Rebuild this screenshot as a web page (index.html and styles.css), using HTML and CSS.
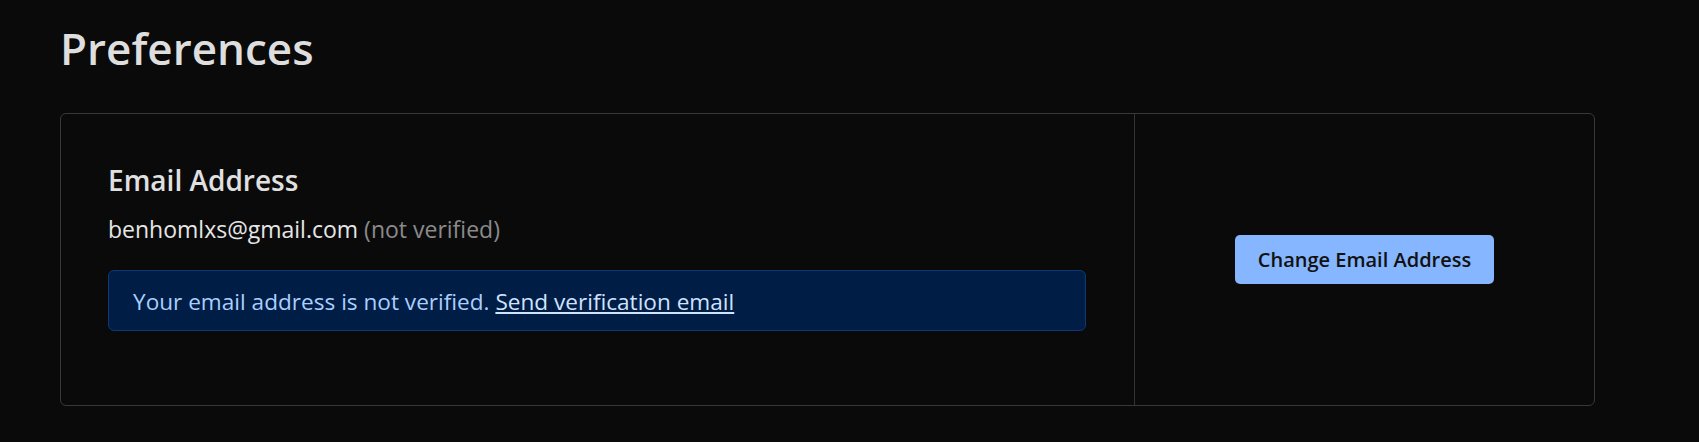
FILE: index.html
```html
<!DOCTYPE html>
<html lang="en">
<head>
<meta charset="utf-8">
<title>Preferences</title>
<link rel="stylesheet" href="styles.css">
</head>
<body>
<main class="page">
  <h1 class="page-title">Preferences</h1>
  <section class="card">
    <div class="card-main">
      <h2 class="card-heading">Email Address</h2>
      <p class="email-line">benhomlxs@gmail.com <span class="muted">(not verified)</span></p>
      <div class="alert">Your email address is not verified. <a href="#" class="alert-link">Send verification email</a></div>
    </div>
    <div class="card-side">
      <button class="btn-primary" type="button">Change Email Address</button>
    </div>
  </section>
</main>
</body>
</html>
```

FILE: styles.css
```css
* { box-sizing: border-box; }
html, body {
  margin: 0;
  padding: 0;
  background: #0a0a0a;
}
body {
  font-family: "Open Sans", "Noto Sans", sans-serif;
  color: #e6e6e6;
}
.page {
  padding: 22px 0 0 60px;
}
.page-title {
  margin: 0;
  font-size: 44px;
  line-height: 1.2;
  font-weight: 600;
  color: #dedede;
}
.card {
  margin-top: 38px;
  width: 1535px;
  height: 293px;
  display: flex;
  border: 1px solid #383838;
  border-radius: 6px;
}
.card-main {
  width: 1074px;
  padding: 50px 48px 0 47px;
  border-right: 1px solid #333;
}
.card-heading {
  margin: 0;
  font-size: 28px;
  line-height: 1.2;
  font-weight: 600;
  color: #e0e0e0;
}
.email-line {
  margin: 15px 0 0;
  font-size: 23px;
  line-height: 1.5;
  color: #e6e6e6;
}
.muted { color: #8a8a8a; }
.alert {
  margin-top: 23px;
  padding: 14px 24px 11px;
  font-size: 22.6px;
  line-height: 34px;
  color: #a9cfff;
  background: #001d45;
  border: 1px solid #0b3978;
  border-radius: 6px;
}
.alert-link {
  color: #cfe3ff;
  text-decoration: underline;
}
.card-side {
  flex: 1;
  display: flex;
  align-items: center;
  justify-content: center;
}
.btn-primary {
  width: 259px;
  height: 49px;
  padding: 0;
  font-family: inherit;
  font-size: 20px;
  font-weight: 600;
  color: #111;
  background: #85b6ff;
  border: none;
  border-radius: 5px;
}
```
